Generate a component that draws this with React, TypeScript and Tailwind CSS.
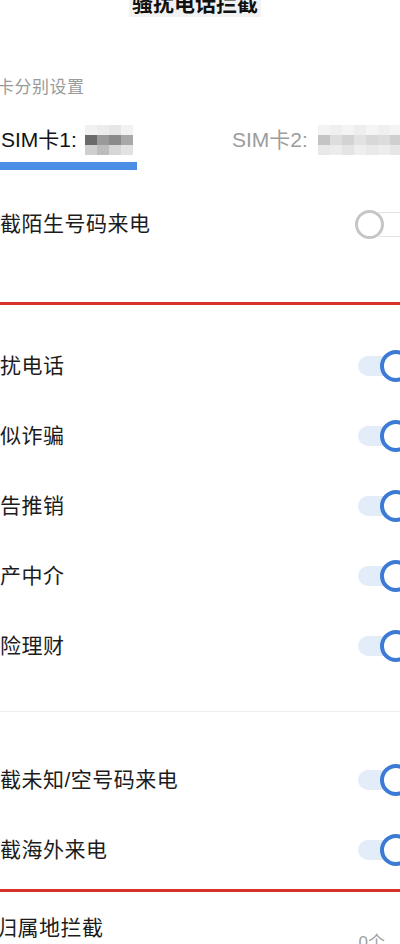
import React from "react";

const font = "font-['Liberation_Sans','Noto_Sans_CJK_SC',sans-serif]";

function Toggle({ on }: { on: boolean }) {
  if (on) {
    return (
      <div className="relative h-[32px] w-[60px] shrink-0 mr-[-18px]">
        <div className="absolute left-0 right-0 top-[6px] h-[20px] rounded-full bg-[#e3ecf9]" />
        <div className="absolute left-[22px] top-0 h-[32px] w-[32px] rounded-full border-[4px] border-[#3b7bd6] bg-white" />
      </div>
    );
  }
  return (
    <div className="relative h-[29px] w-[60px] shrink-0 mr-[-15px]">
      <div className="absolute left-[14px] right-0 top-[2px] h-[25px] rounded-full border border-[#e2e2e2] bg-white" />
      <div className="absolute left-0 top-0 h-[29px] w-[29px] rounded-full border-[3px] border-[#c6c6c6] bg-white" />
    </div>
  );
}

function Row({ label, on }: { label: string; on: boolean }) {
  return (
    <div className="flex h-[70px] items-center justify-between">
      <span className="whitespace-nowrap text-[21px] leading-[24px] tracking-[0.5px] text-[#1c1c1c]">{label}</span>
      <Toggle on={on} />
    </div>
  );
}

// redacted phone number, drawn as a coarse mosaic
function Mosaic({ cells }: { cells: string[][] }) {
  return (
    <div className="flex shrink-0 flex-col">
      {cells.map((row, i) => (
        <div key={i} className="flex">
          {row.map((c, j) => (
            <div key={j} className={`h-[10px] w-[12px] shrink-0 ${c}`} />
          ))}
        </div>
      ))}
    </div>
  );
}

export default function App() {
  return (
    <div className={`relative h-[944px] w-[400px] overflow-hidden bg-white ${font}`}>
      {/* header */}
      <div className="flex h-[62px] justify-center pr-[10px]">
        <span className="mt-[-7px] h-[24px] bg-[#f2f2f2] px-[3px] text-[21px] font-bold leading-[21px] text-[#111]">
          骚扰电话拦截
        </span>
      </div>

      <div className="flex h-[52px] items-center">
        <span className="ml-[-3px] text-[17px] leading-[24px] tracking-[0.5px] text-[#9a9a9a]">卡分别设置</span>
      </div>

      {/* sim tabs */}
      <div className="flex h-[62px]">
        <div className="flex w-[137px] shrink-0 flex-col pt-[11px]">
          <div className="flex h-[30px] items-center gap-[8px] pl-[1px]">
            <span className="shrink-0 whitespace-nowrap text-[21px] leading-[24px] text-[#111]">SIM卡1:</span>
            <Mosaic
              cells={[
                ["bg-[#f1f1f1]", "bg-[#ececec]", "bg-[#e6e6e6]", "bg-[#f2f2f2]"],
                ["bg-[#6a6a6a]", "bg-[#9a9a9a]", "bg-[#8a8a8a]", "bg-[#a8a8a8]"],
                ["bg-[#cfcfcf]", "bg-[#bdbdbd]", "bg-[#d6d6d6]", "bg-[#e2e2e2]"],
              ]}
            />
          </div>
          <div className="mt-[7px] h-[8px] w-[137px] bg-[#4a8ee6]" />
        </div>
        <div className="ml-[95px] flex shrink-0 flex-col pt-[11px]">
          <div className="flex h-[30px] items-center gap-[10px]">
            <span className="shrink-0 whitespace-nowrap text-[21px] leading-[24px] text-[#9c9c9c]">SIM卡2:</span>
            <Mosaic
              cells={[
                ["bg-[#f3f3f3]", "bg-[#efefef]", "bg-[#f4f4f4]", "bg-[#eeeeee]", "bg-[#f5f5f5]", "bg-[#f0f0f0]", "bg-[#f4f4f4]"],
                ["bg-[#c4c4c4]", "bg-[#dddddd]", "bg-[#d3d3d3]", "bg-[#e2e2e2]", "bg-[#d8d8d8]", "bg-[#dcdcdc]", "bg-[#cfcfcf]"],
                ["bg-[#e8e8e8]", "bg-[#ececec]", "bg-[#e4e4e4]", "bg-[#eeeeee]", "bg-[#e9e9e9]", "bg-[#ededed]", "bg-[#e6e6e6]"],
              ]}
            />
          </div>
        </div>
      </div>

      <div className="flex h-[96px] items-center justify-between">
        <span className="whitespace-nowrap text-[21px] leading-[24px] tracking-[0.5px] text-[#1c1c1c]">截陌生号码来电</span>
        <Toggle on={false} />
      </div>

      <div className="h-[30px]" />
      <div className="h-[3px] bg-[#d7322a]" />
      <div className="h-[26px]" />

      <Row label="扰电话" on />
      <Row label="似诈骗" on />
      <Row label="告推销" on />
      <Row label="产中介" on />
      <Row label="险理财" on />

      <div className="h-[30px]" />
      <div className="h-px bg-[#efefef]" />
      <div className="h-[33px]" />

      <Row label="截未知/空号码来电" on />
      <Row label="截海外来电" on />

      <div className="h-[4px]" />
      <div className="h-[3px] bg-[#d7322a]" />

      <div className="flex h-[72px] justify-between">
        <span className="ml-[-4px] whitespace-nowrap pt-[24px] text-[21px] leading-[24px] tracking-[0.5px] text-[#1c1c1c]">归属地拦截</span>
        <span className="pr-[15px] pt-[39px] text-[17px] leading-[24px] text-[#a0a0a0]">0个</span>
      </div>
    </div>
  );
}
